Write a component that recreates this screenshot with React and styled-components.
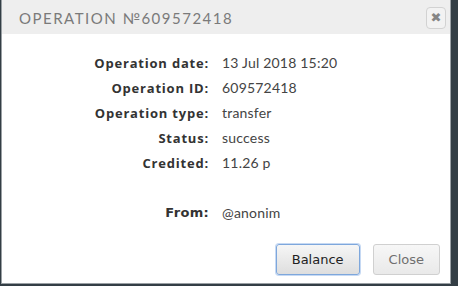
import React from "react";
import styled, { createGlobalStyle } from "styled-components";

const GlobalStyle = createGlobalStyle`
  html, body {
    margin: 0;
    padding: 0;
    background-color: #333e45;
    width: 458px;
    height: 286px;
    overflow: hidden;
  }
`;

const Dialog = styled.div`
  margin-left: 1px;
  width: 450px;
  height: 284px;
  box-sizing: border-box;
  background-color: #FFFFFF;
  border: 1px solid #9aa0a4;
  border-top: none;
  display: flex;
  flex-direction: column;
`;

const Header = styled.div`
  display: flex;
  align-items: center;
  justify-content: space-between;
  height: 34px;
  padding: 0px 4px 0px 17px;
  background-color: #EEEEEE;
  flex-shrink: 0;
`;

const Title = styled.div`
  font-family: "Lato", "DejaVu Sans", sans-serif;
  font-size: 15px;
  letter-spacing: 1.5px;
  color: #7a7a7a;
  padding-top: 2px;
`;

const CloseIcon = styled.button`
  width: 20px;
  height: 22px;
  padding: 0;
  border: 1px solid #d2d2d2;
  border-radius: 4px;
  background-color: #f2f2f2;
  color: #858585;
  font-family: "DejaVu Sans", sans-serif;
  font-weight: bold;
  font-size: 13px;
  line-height: 20px;
  display: flex;
  align-items: center;
  justify-content: center;
  margin-top: 2px;
`;

const Content = styled.div`
  display: grid;
  grid-template-columns: 207px 1fr;
  column-gap: 13px;
  grid-auto-rows: 25px;
  align-items: center;
  padding-top: 16px;
`;

const Label = styled.div`
  text-align: right;
  font-family: ${props => props.plain ? '"DejaVu Sans", sans-serif' : '"Open Sans", sans-serif'};
  font-weight: bold;
  font-size: 13px;
  letter-spacing: ${props => props.plain ? "0.3px" : "0.8px"};
  color: #333333;
`;

const Value = styled.div`
  font-family: "Lato", sans-serif;
  font-size: 14px;
  color: #444444;
  letter-spacing: 0.2px;
`;

const Spacer = styled.div`
  grid-column: 1 / 3;
`;

const Footer = styled.div`
  display: flex;
  justify-content: flex-end;
  gap: 13px;
  padding: 19px 10px 0px 0px;
`;

const Button = styled.button`
  height: 31px;
  padding: 0px 15px;
  border-radius: 3px;
  font-family: "DejaVu Sans", sans-serif;
  font-size: 13px;
  color: ${props => props.primary ? "#222222" : "#6f6f6f"};
  border: 1px solid ${props => props.primary ? "#7ea7dc" : "#d0d0d0"};
  background: ${props => props.primary
    ? "linear-gradient(#f6f6f6, #dedede)"
    : "linear-gradient(#f7f7f7, #e9e9e9)"};
  box-shadow: ${props => props.primary ? "0 0 0 1px #c6d9f3" : "none"};
`;

const rows = [
  ["Operation date:", "13 Jul 2018 15:20"],
  ["Operation ID:", "609572418"],
  ["Operation type:", "transfer"],
  ["Status:", "success"],
  ["Credited:", "11.26 р"],
];

const App = () => {
  return (
    <>
      <GlobalStyle />
      <Dialog>
        <Header>
          <Title>OPERATION №609572418</Title>
          <CloseIcon>✖</CloseIcon>
        </Header>
        <Content>
          {
            rows.map(([l, v], i) => (
              <React.Fragment key={i}>
                <Label>{l}</Label>
                <Value>{v}</Value>
              </React.Fragment>
            ))
          }
          <Spacer />
          <Label plain>From:</Label>
          <Value>@anonim</Value>
        </Content>
        <Footer>
          <Button primary>Balance</Button>
          <Button>Close</Button>
        </Footer>
      </Dialog>
    </>
  );
};

export default App;
